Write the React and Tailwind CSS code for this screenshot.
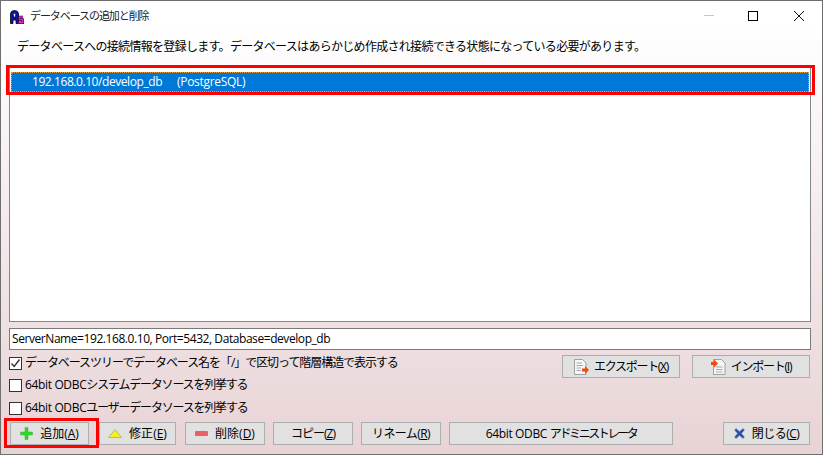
import React from 'react';

// --- アイコン ---
const AppIcon = () => (
  <svg width="14" height="14" viewBox="0 0 14 14">
    <path d="M0.5 13.5 V4 Q0.5 0.5 4.5 0.5 Q8.5 0.5 8.5 4 V13.5 H6 V10 H3 V13.5 Z M3.3 7 H5.7 V4.5 Q5.7 3.2 4.5 3.2 Q3.3 3.2 3.3 4.5 Z" fill="#1010c0" stroke="#000000" strokeWidth="0.8" />
    <path d="M13 7 H9.5 V9.8 H12.8 V12.8 H8.5" fill="none" stroke="#000000" strokeWidth="2.6" />
    <path d="M13 7 H9.5 V9.8 H12.8 V12.8 H8.5" fill="none" stroke="#f020e0" strokeWidth="1.5" />
  </svg>
);

const PlusIcon = () => (
  <svg width="13" height="13" viewBox="0 0 13 13">
    <path d="M5 0.5 H8 V5 H12.5 V8 H8 V12.5 H5 V8 H0.5 V5 H5 Z" fill="#22dd22" stroke="#6a9a6a" strokeWidth="0.5" />
  </svg>
);

const TriangleIcon = () => (
  <svg width="14" height="9" viewBox="0 0 14 9">
    <path d="M7 0.5 L13.5 8.5 H0.5 Z" fill="#f4f01c" stroke="#a8a88c" strokeWidth="0.8" />
  </svg>
);

const MinusIcon = () => (
  <svg width="13" height="5" viewBox="0 0 13 5">
    <rect x="0" y="0" width="13" height="5" rx="1" fill="#e8606a" />
  </svg>
);

const CloseIcon = () => (
  <svg width="11" height="11" viewBox="0 0 11 11">
    <path d="M2 0.5 L5.5 3.5 L9 0.5 L10.5 2 L7.5 5.5 L10.5 9 L9 10.5 L5.5 7.5 L2 10.5 L0.5 9 L3.5 5.5 L0.5 2 Z" fill="#2a4fa8" stroke="#7a8cc0" strokeWidth="0.5" />
  </svg>
);

const ExportIcon = () => (
  <svg width="15" height="16" viewBox="0 0 15 16">
    <path d="M0.5 0.5 H8.5 L12 4 V15.5 H0.5 Z" fill="#f6f6f6" stroke="#a0a0a0" />
    <path d="M2.5 4 H8 M2.5 6.5 H9 M2.5 9 H7 M2.5 11.5 H7" stroke="#a8a8a8" />
    <path d="M8 9.5 H11 V7 L15 11 L11 15 V12.5 H8 Z" fill="#f04a10" />
  </svg>
);

const ImportIcon = () => (
  <svg width="15" height="16" viewBox="0 0 15 16">
    <path d="M2.5 0.5 H10.5 L14 4 V15.5 H2.5 Z" fill="#f6f6f6" stroke="#a0a0a0" />
    <path d="M5 8 H11.5 M5 10.5 H11.5 M5 13 H11.5" stroke="#a8a8a8" />
    <path d="M0 3 H3 V0.5 L7 4.5 L3 8.5 V6 H0 Z" fill="#f04a10" />
  </svg>
);

// --- ボタン ---
const DlgButton = ({ className = '', icon, label, mnemonic, gap = 'gap-[7px]', tracking = '' }) => (
  <button className={`h-[23px] flex items-center justify-center ${gap} bg-[#e1e1e1] border border-[#adadad] text-[12px] leading-none text-black ${className}`}>
    {icon}
    <span className={tracking}>
      {label}
      {mnemonic && <>(<span className="underline">{mnemonic}</span>)</>}
    </span>
  </button>
);

// --- チェックボックス ---
const CheckRow = ({ checked, children, className = '' }) => (
  <label className={`flex items-center gap-[3px] h-[16px] text-[12px] leading-none text-black ${className}`}>
    <span className="w-[13px] h-[13px] border border-[#333333] bg-white flex items-center justify-center shrink-0">
      {checked && (
        <svg width="11" height="11" viewBox="0 0 11 11">
          <path d="M1.5 5.5 L4.2 8.5 L9.5 1.5" fill="none" stroke="#333333" strokeWidth="1.4" />
        </svg>
      )}
    </span>
    <span className="whitespace-nowrap">{children}</span>
  </label>
);

export default function App() {
  return (
    <div className="w-[823px] h-[455px] flex flex-col border border-[#6f6f6f] bg-gradient-to-b from-white from-[5%] to-[#e8d3d5] font-['Open_Sans','Noto_Sans_CJK_JP',sans-serif] overflow-hidden">
      {/* タイトルバー */}
      <div className="h-[29px] flex items-center shrink-0">
        <div className="ml-[9px] mr-[6px] mt-[2px]"><AppIcon /></div>
        <span className="text-[11px] tracking-[-1.08px] text-[#222222] mt-[1px]">データベースの追加と削除</span>
        <div className="ml-auto flex items-center">
          <div className="w-[46px] h-[29px] flex items-center justify-center -mr-[2px]">
            <span className="w-[10px] h-px bg-[#c8c8c8]" />
          </div>
          <div className="w-[46px] h-[29px] flex items-center justify-center">
            <span className="w-[10px] h-[10px] border border-black" />
          </div>
          <div className="w-[46px] h-[29px] flex items-center justify-center">
            <svg width="10" height="10" viewBox="0 0 10 10">
              <path d="M0 0 L10 10 M10 0 L0 10" stroke="#111111" strokeWidth="1" />
            </svg>
          </div>
        </div>
      </div>

      {/* 説明文 */}
      <p className="h-[16px] mt-[9px] ml-[16px] text-[12px] tracking-[-0.7px] leading-[16px] text-black whitespace-nowrap">
        データベースへの接続情報を登録します。データベースはあらかじめ作成され接続できる状態になっている必要があります。
      </p>

      {/* リスト */}
      <div className="relative mt-[12px] ml-[8px] mr-[11px] h-[255px] border border-[#828790] bg-white pt-[3px] px-[1px]">
        <div className="h-[20px] mt-[1px] bg-[#0078d7] border border-dotted border-[#e8a040] flex items-center pl-[20px] text-[12px] leading-none text-white">
          <span className="w-[145px] tracking-[-0.43px]">192.168.0.10/develop_db</span>
          <span className="tracking-[-0.3px]">(PostgreSQL)</span>
        </div>
        <div className="absolute left-[-4px] right-[-5px] top-[-3px] h-[30px] border-[3px] border-[#ff0000]" />
      </div>

      {/* 接続文字列 */}
      <div className="mt-[6px] ml-[8px] mr-[11px] h-[22px] border border-[#7a7a7a] bg-white flex items-center pl-[2px] text-[12px] tracking-[-0.43px] leading-none text-black shrink-0">
        ServerName=192.168.0.10, Port=5432, Database=develop_db
      </div>

      {/* オプションとエクスポート */}
      <div className="mt-[5px] ml-[8px] mr-[12px] flex justify-between items-start h-[66px]">
        <div className="flex flex-col">
          <CheckRow checked><span className="tracking-[-1.06px]">データベースツリーでデータベース名を「/」で区切って階層構造で表示する</span></CheckRow>
          <CheckRow className="mt-[6px]">
            <span className="tracking-[-0.35px]">64bit ODBC</span>
            <span className="tracking-[-1.2px]">システムデータソースを列挙する</span>
          </CheckRow>
          <CheckRow className="mt-[7px]">
            <span className="tracking-[-0.35px]">64bit ODBC</span>
            <span className="tracking-[-1.2px]">ユーザーデータソースを列挙する</span>
          </CheckRow>
        </div>
        <div className="flex gap-[12px]">
          <DlgButton className="w-[118px]" icon={<ExportIcon />} label="エクスポート" mnemonic="X" gap="gap-[5px]" tracking="tracking-[-1.3px]" />
          <DlgButton className="w-[118px]" icon={<ImportIcon />} label="インポート" mnemonic="I" gap="gap-[5px]" tracking="tracking-[-1.25px]" />
        </div>
      </div>

      {/* 下部ボタン */}
      <div className="mt-[1px] ml-[9px] mr-[12px] flex items-center">
        <div className="relative mr-[10px]">
          <DlgButton className="w-[79px]" icon={<PlusIcon />} label="追加" mnemonic="A" />
          <div className="absolute left-[-6px] right-[-10px] top-[-4px] h-[30px] border-[3px] border-[#ff0000]" />
        </div>
        <DlgButton className="w-[77px] mr-[9px]" icon={<TriangleIcon />} label="修正" mnemonic="E" />
        <DlgButton className="w-[80px] mr-[8px]" icon={<MinusIcon />} label="削除" mnemonic="D" />
        <DlgButton className="w-[80px] mr-[8px]" label="コピー" mnemonic="Z" tracking="tracking-[-1px]" />
        <DlgButton className="w-[80px] mr-[8px]" label="リネーム" mnemonic="R" tracking="tracking-[-0.6px]" />
        <DlgButton
          className="w-[224px]"
          label={<><span className="tracking-[-0.35px]">64bit ODBC </span><span className="tracking-[-2.4px]">アドミニストレータ</span></>}
        />
        <DlgButton className="w-[87px] ml-auto" icon={<CloseIcon />} label="閉じる" mnemonic="C" tracking="tracking-[-0.5px]" />
      </div>
    </div>
  );
}
